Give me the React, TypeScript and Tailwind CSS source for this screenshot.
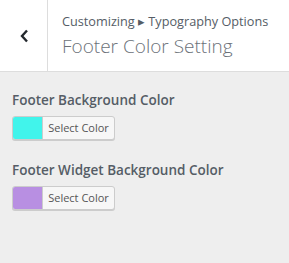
import React from 'react';

const ColorControl = ({ label, color }: { label: string; color: string }) => (
  <div className="flex flex-col">
    <span className="text-[13.5px] font-semibold text-[#555d66] leading-[20px]">{label}</span>
    <button className="mt-[6px] flex h-[24px] w-[103px] items-stretch overflow-hidden rounded-[3px] border border-[#cccccc] bg-[#f7f7f7] shadow-[0_1px_0_#cccccc]">
      <span className="w-[30px] border-r border-[#cccccc]" style={{ backgroundColor: color }} />
      <span className="flex flex-1 items-center justify-center text-[11px] text-[#555555]">Select Color</span>
    </button>
  </div>
);

export default function App() {
  return (
    <div className="flex h-[263px] w-[289px] flex-col bg-[#eeeeee] font-['Open_Sans',sans-serif]">
      {/* Header */}
      <div className="flex h-[72px] border-b border-[#dddddd] bg-white">
        <button className="flex w-[48px] items-center justify-center border-r border-[#dddddd]">
          <svg width="10" height="14" viewBox="0 0 10 14" fill="none">
            <path d="M8 1.5 L3 7 L8 12.5" stroke="#23282d" strokeWidth="2.4" />
          </svg>
        </button>
        <div className="flex flex-col justify-center pl-[14px] text-[#555d66]">
          <span className="text-[12.7px] leading-[18px]">Customizing ▸ Typography Options</span>
          <span className="mt-[3px] text-[19px] font-light leading-[26px] text-[#6b7178]">Footer Color Setting</span>
        </div>
      </div>

      {/* Controls */}
      <div className="flex flex-col gap-[20px] px-[12px] pt-[18px]">
        <ColorControl label="Footer Background Color" color="#41f4eb" />
        <ColorControl label="Footer Widget Background Color" color="#b88fe2" />
      </div>
    </div>
  );
}
